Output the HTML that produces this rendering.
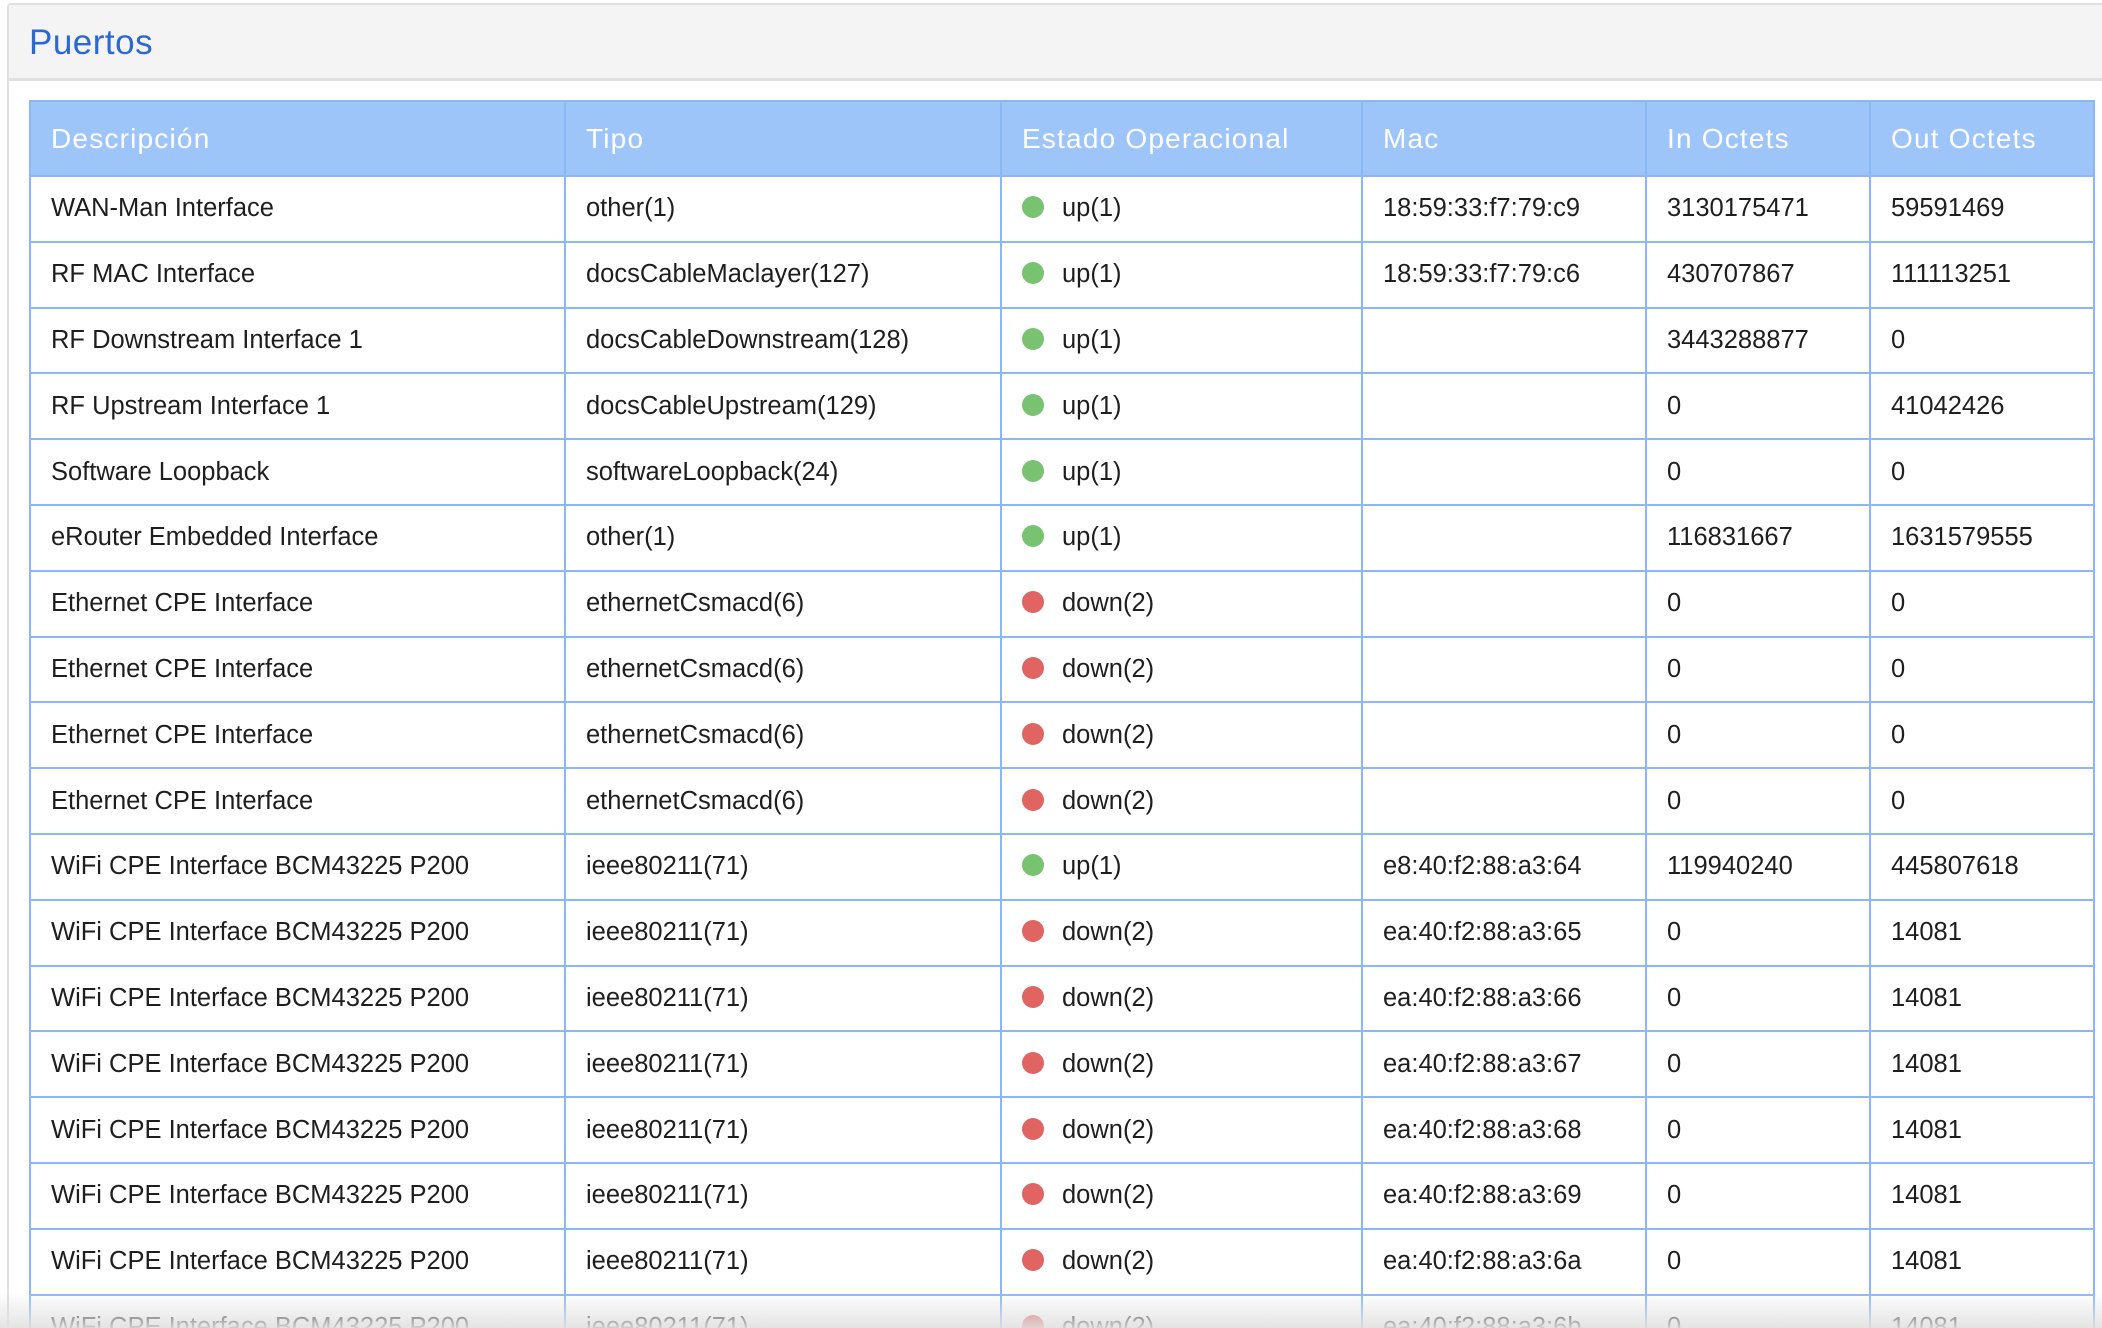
<!DOCTYPE html>
<html><head><meta charset="utf-8"><style>
html,body{margin:0;padding:0;background:#fff;width:2102px;height:1328px;overflow:hidden;font-family:"Liberation Sans",sans-serif}
.wrap{position:relative;width:2102px;height:1328px;overflow:hidden}
.panel{position:absolute;left:7px;top:3px;width:2110px;height:1330px;border:2px solid #e0e0e0;border-radius:4px;background:#fff}
.ph{height:73px;background:#f4f4f4;border-bottom:3px solid #e0e0e0;position:relative}
.ph span{position:absolute;left:20px;top:18px;font-size:35px;color:#2b68d3;letter-spacing:0.5px}
table{position:absolute;left:29px;top:100px;border-collapse:collapse;table-layout:fixed;width:2064px}
th,td{border:2px solid #8ab8f5;text-align:left;padding:0 0 0 20px;white-space:nowrap;overflow:hidden}
th{background:#9ec5fa;color:#fff;font-weight:normal;font-size:28px;height:73px;letter-spacing:1.2px}
td{font-size:25.5px;color:#1e1e1e;height:63.8px}
.d{display:inline-block;width:22px;height:22px;border-radius:50%;vertical-align:-2px;margin-right:18px}
.g{background:#78c272}.r{background:#df6462}
.fade{position:absolute;left:0;top:1292px;width:2102px;height:36px;background:linear-gradient(rgba(240,240,240,0),rgba(225,225,225,0.9))}
</style></head><body><div class="wrap">
<div class="panel"><div class="ph"><span>Puertos</span></div></div>
<table>
<colgroup><col style="width:535px"><col style="width:436px"><col style="width:361px"><col style="width:284px"><col style="width:224px"><col style="width:224px"></colgroup>
<tr><th>Descripción</th><th>Tipo</th><th>Estado Operacional</th><th>Mac</th><th>In Octets</th><th>Out Octets</th></tr>
<tr><td>WAN-Man Interface</td><td>other(1)</td><td><span class="d g"></span>up(1)</td><td>18:59:33:f7:79:c9</td><td>3130175471</td><td>59591469</td></tr>
<tr><td>RF MAC Interface</td><td>docsCableMaclayer(127)</td><td><span class="d g"></span>up(1)</td><td>18:59:33:f7:79:c6</td><td>430707867</td><td>111113251</td></tr>
<tr><td>RF Downstream Interface 1</td><td>docsCableDownstream(128)</td><td><span class="d g"></span>up(1)</td><td></td><td>3443288877</td><td>0</td></tr>
<tr><td>RF Upstream Interface 1</td><td>docsCableUpstream(129)</td><td><span class="d g"></span>up(1)</td><td></td><td>0</td><td>41042426</td></tr>
<tr><td>Software Loopback</td><td>softwareLoopback(24)</td><td><span class="d g"></span>up(1)</td><td></td><td>0</td><td>0</td></tr>
<tr><td>eRouter Embedded Interface</td><td>other(1)</td><td><span class="d g"></span>up(1)</td><td></td><td>116831667</td><td>1631579555</td></tr>
<tr><td>Ethernet CPE Interface</td><td>ethernetCsmacd(6)</td><td><span class="d r"></span>down(2)</td><td></td><td>0</td><td>0</td></tr>
<tr><td>Ethernet CPE Interface</td><td>ethernetCsmacd(6)</td><td><span class="d r"></span>down(2)</td><td></td><td>0</td><td>0</td></tr>
<tr><td>Ethernet CPE Interface</td><td>ethernetCsmacd(6)</td><td><span class="d r"></span>down(2)</td><td></td><td>0</td><td>0</td></tr>
<tr><td>Ethernet CPE Interface</td><td>ethernetCsmacd(6)</td><td><span class="d r"></span>down(2)</td><td></td><td>0</td><td>0</td></tr>
<tr><td>WiFi CPE Interface BCM43225 P200</td><td>ieee80211(71)</td><td><span class="d g"></span>up(1)</td><td>e8:40:f2:88:a3:64</td><td>119940240</td><td>445807618</td></tr>
<tr><td>WiFi CPE Interface BCM43225 P200</td><td>ieee80211(71)</td><td><span class="d r"></span>down(2)</td><td>ea:40:f2:88:a3:65</td><td>0</td><td>14081</td></tr>
<tr><td>WiFi CPE Interface BCM43225 P200</td><td>ieee80211(71)</td><td><span class="d r"></span>down(2)</td><td>ea:40:f2:88:a3:66</td><td>0</td><td>14081</td></tr>
<tr><td>WiFi CPE Interface BCM43225 P200</td><td>ieee80211(71)</td><td><span class="d r"></span>down(2)</td><td>ea:40:f2:88:a3:67</td><td>0</td><td>14081</td></tr>
<tr><td>WiFi CPE Interface BCM43225 P200</td><td>ieee80211(71)</td><td><span class="d r"></span>down(2)</td><td>ea:40:f2:88:a3:68</td><td>0</td><td>14081</td></tr>
<tr><td>WiFi CPE Interface BCM43225 P200</td><td>ieee80211(71)</td><td><span class="d r"></span>down(2)</td><td>ea:40:f2:88:a3:69</td><td>0</td><td>14081</td></tr>
<tr><td>WiFi CPE Interface BCM43225 P200</td><td>ieee80211(71)</td><td><span class="d r"></span>down(2)</td><td>ea:40:f2:88:a3:6a</td><td>0</td><td>14081</td></tr>
<tr><td>WiFi CPE Interface BCM43225 P200</td><td>ieee80211(71)</td><td><span class="d r"></span>down(2)</td><td>ea:40:f2:88:a3:6b</td><td>0</td><td>14081</td></tr>
</table>
<div class="fade"></div>
</div></body></html>
